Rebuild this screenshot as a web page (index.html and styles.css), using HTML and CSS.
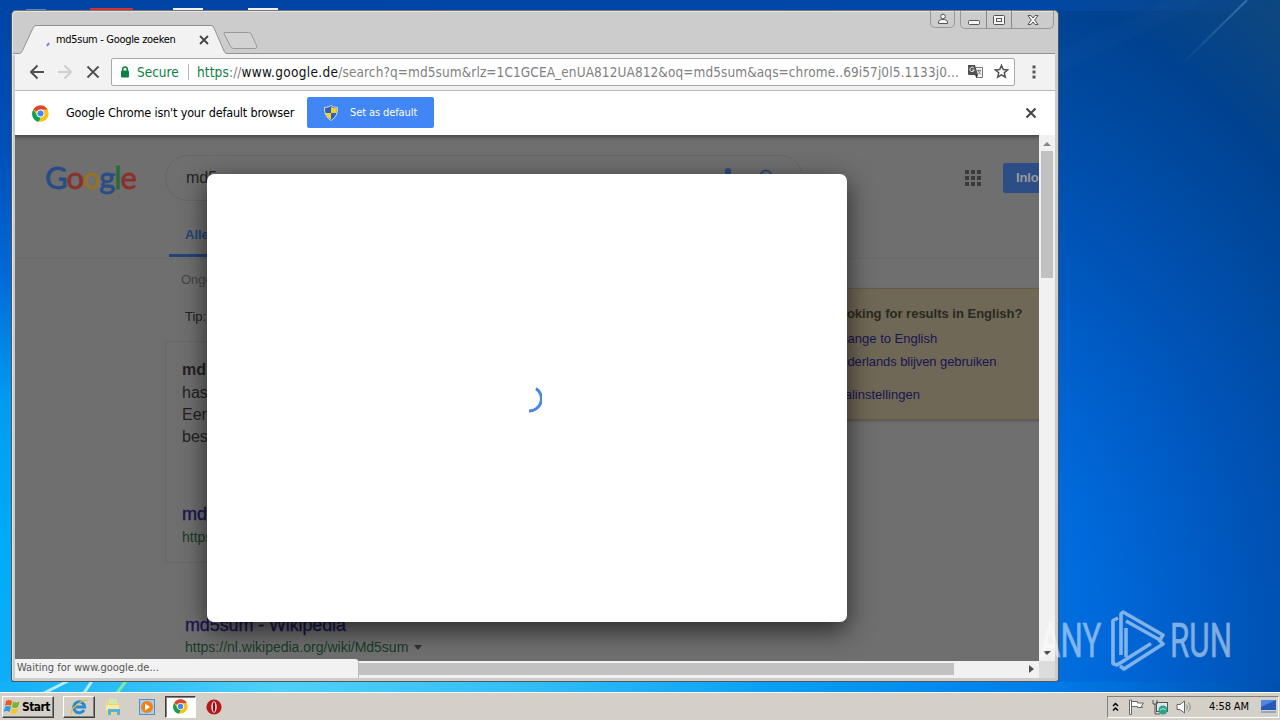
FILE: index.html
```html
<!DOCTYPE html>
<html lang="nl">
<head>
<meta charset="utf-8">
<title>md5sum - Google zoeken</title>
<link rel="stylesheet" href="styles.css">
</head>
<body>
<div class="desktop">
  <svg class="wallpaper" width="1280" height="693" viewBox="0 0 1280 693">
    <defs>
      <linearGradient id="ray" x1="0" y1="1" x2="1" y2="0"><stop offset="0" stop-color="#5a93c8" stop-opacity="0"/><stop offset="1" stop-color="#5a93c8" stop-opacity=".55"/></linearGradient>
    </defs>
    <path d="M1180 66L1247 0" stroke="url(#ray)" stroke-width="2"/>
    <path d="M1060 50L1170 0h40L1062 72z" fill="#2a6cb0" opacity=".08"/>
    <path d="M44 693l24-12M84 693l8-12" stroke="#b8ecff" stroke-width="3"/>
    <path d="M117 693l9-12" stroke="#7fe8a0" stroke-width="3"/>
    <path d="M26 9h20v3H26z" fill="#5d84b8"/><path d="M90 8h43v4H90z" fill="#d8302c"/><path d="M173 8h30v3h-30zM248 8h30v3h-30z" fill="#eef2f6"/>
  </svg>

  <main class="window">
    <header class="titlebar">
      <svg class="tabs" width="260" height="30" viewBox="0 0 260 30">
        <path d="M0 28.5h6.500q2-.5 3-3L20 3q1-2.500 3-2.500h175q2 0 3 2.500l10 23q1 2.500 3 2.500h46v2H0z" fill="#f2f2f2"/>
        <path d="M0 28.500h6.500q2-.5 3-3L20 3q1-2.500 3-2.500h175q2 0 3 2.500l10 23q1 2.500 3 2.500h46" fill="none" stroke="#929292"/>
        <path d="M211.500 7.500h24q2 0 3 2l5 11q1 3-1 3h-22q-2 0-3-2l-6-12q-1-2 0-2z" fill="#d2d2d2" stroke="#999"/>
      </svg>
      <div class="tab">
        <svg class="throb" width="6" height="6"><path d="M2 5l2-3" stroke="#6c7fe0" stroke-width="2"/></svg>
        <span class="tab-title">md5sum - Google zoeken</span>
        <svg width="10" height="10" viewBox="0 0 10 10"><path d="M1 1l8 8M9 1l-8 8" stroke="#444" stroke-width="1.800"/></svg>
      </div>
      <div class="controls">
        <span class="ctl user"><svg width="12" height="12" viewBox="0 0 12 12"><circle cx="6" cy="3.500" r="2.300"/><path d="M1.500 10.500V9q0-2 3-2.500h3q3 .5 3 2.500v1.500z"/></svg></span>
        <span class="ctl-set">
          <span class="ctl"><svg width="12" height="12" viewBox="0 0 12 12"><rect x=".5" y="6.500" width="11" height="4" rx="1"/></svg></span>
          <span class="ctl"><svg width="12" height="12" viewBox="0 0 12 12"><rect x=".5" y="1.500" width="11" height="9" rx="1"/><rect x="3.500" y="4.500" width="5" height="3"/></svg></span>
          <span class="ctl close"><svg width="12" height="12" viewBox="0 0 12 12"><path d="M1 1.500h3l2 2.500 2-2.500h3L7.700 6l3.300 4.500H8L6 8l-2 2.500H1L4.300 6z"/></svg></span>
        </span>
      </div>
    </header>

    <nav class="toolbar">
      <svg class="back" width="16" height="16" viewBox="0 0 16 16"><path d="M15 8H2.500M8.500 1.500L2 8l6.500 6.500" fill="none" stroke="#505050" stroke-width="2"/></svg>
      <svg class="fwd" width="16" height="16" viewBox="0 0 16 16"><path d="M1 8h12.500M7.500 1.500L14 8l-6.500 6.500" fill="none" stroke="#d0d0d0" stroke-width="2"/></svg>
      <svg class="stop" width="14" height="14" viewBox="0 0 14 14"><path d="M1.500 1.500l11 11M12.500 1.500l-11 11" stroke="#505050" stroke-width="1.800"/></svg>
      <div class="omnibox">
        <svg width="10" height="12" viewBox="0 0 10 12"><rect x="1" y="4.500" width="8" height="7" rx="1" fill="#0b8043"/><path d="M2.700 5V3.300a2.300 2.300 0 0 1 4.600 0V5" fill="none" stroke="#0b8043" stroke-width="1.500"/></svg>
        <span class="secure">Secure</span>
        <span class="bar"></span>
        <span class="url"><span class="scheme">https</span>://<b>www.google.de</b><span class="path">/search?q=md5sum&amp;rlz=1C1GCEA_enUA812UA812&amp;oq=md5sum&amp;aqs=chrome..69i57j0l5.1133j0...</span></span>
        <svg class="translate" width="15" height="15" viewBox="0 0 15 15"><path d="M6 3.500h8.500v10H8" fill="#f6f6f6" stroke="#777"/><path d="M0 1h7l3 10H1q-1 0-1-1z" fill="#505050"/><path d="M7 11h3l-1.500 3z" fill="#333"/><path d="M6 4.300A2.200 2.200 0 1 0 6.200 6H4.300" fill="none" stroke="#fff"/><path d="M9 6.500h4M11 5.500v1M12.500 6.500q-.5 2-2.500 4M10 7l3 3.500" fill="none" stroke="#777" stroke-width=".9"/></svg>
        <svg class="star" width="15" height="15" viewBox="0 0 15 15"><path d="M7.500 1.500l1.800 4 4.300.4-3.300 2.900 1 4.300-3.800-2.300-3.800 2.300 1-4.300L1.400 5.900l4.300-.4z" fill="none" stroke="#505050" stroke-width="1.500"/></svg>
      </div>
      <svg width="4" height="14" viewBox="0 0 4 14"><path d="M.5.500h3v3h-3zM.5 5.500h3v3h-3zM.5 10.500h3v3h-3z" fill="#555"/></svg>
    </nav>

    <section class="infobar">
      <svg width="17" height="17" viewBox="0 0 48 48"><use href="#chrome"/></svg>
      <span class="info-text">Google Chrome isn't your default browser</span>
      <button class="set-default">
        <svg width="14" height="16" viewBox="0 0 14 16"><path d="M7 .5Q9.500 2.500 13.500 2.500q.5 9-6.500 13-7-4-6.500-13Q4.500 2.500 7 .5z" fill="#2b62b8" stroke="#d5dce6"/><path d="M7 2q2.500 1.300 5.800 1.300Q13 5.500 12.500 8H7zM7 8v6.500Q2.500 12.500 1.500 8z" fill="#f8d229"/></svg>
        <span>Set as default</span>
      </button>
      <svg class="dismiss" width="12" height="12" viewBox="0 0 12 12"><path d="M1.500 1.500l9 9M10.500 1.500l-9 9" stroke="#444" stroke-width="2"/></svg>
    </section>

    <div class="viewport">
      <div class="page">
        <div class="search-head">
          <div class="logo"><span class="g1">G</span><span class="g2">o</span><span class="g3">o</span><span class="g1">g</span><span class="g4">l</span><span class="g2">e</span></div>
          <div class="searchbox">
            <span>md5sum</span>
            <svg class="mic" width="14" height="22" viewBox="0 0 14 22"><rect x="4" width="6" height="13" rx="3" fill="#2b4c80"/></svg>
            <svg class="lens" width="18" height="18" viewBox="0 0 18 18"><circle cx="7" cy="7" r="5.500" fill="none" stroke="#2b4c80" stroke-width="2"/></svg>
          </div>
          <svg class="apps" width="16" height="16" viewBox="0 0 16 16"><path d="M0 0h4v4H0zM6 0h4v4H6zM12 0h4v4h-4zM0 6h4v4H0zM6 6h4v4H6zM12 6h4v4h-4zM0 12h4v4H0zM6 12h4v4H6zM12 12h4v4h-4z" fill="#3b3b3b"/></svg>
          <span class="login">Inlo</span>
        </div>
        <div class="tabs-row"><span class="tab-all">Alle</span></div>
        <div class="columns">
          <div class="results">
            <p class="stats">Ongeveer</p>
            <p class="tip">Tip:</p>
            <div class="card">
              <b>md5sum</b>
              <span>hash</span><span>Een</span><span>bestand</span>
              <h3>md5sum</h3>
              <cite>https://</cite>
            </div>
            <h3 class="result">md5sum - Wikipedia</h3>
            <cite class="result-url">https://nl.wikipedia.org/wiki/Md5sum<i class="drop"></i></cite>
          </div>
          <aside class="lang">
            <b>Looking for results in English?</b>
            <span class="l1">Change to English</span>
            <span class="l2">Nederlands blijven gebruiken</span>
            <span class="l3">Taalinstellingen</span>
          </aside>
        </div>
        <div class="modal"><svg width="30" height="30" viewBox="0 0 30 30"><path d="M24 5.500A12.300 12.300 0 0 1 17 28" fill="none" stroke="#4a84e4" stroke-width="3"/></svg></div>
      </div>
      <div class="vscroll"><i class="up"></i><i class="vthumb"></i><i class="down"></i></div>
      <div class="hscroll"><i class="hthumb"></i><i class="right"></i></div>
      <div class="corner"></div>
      <div class="status">Waiting for www.google.de...</div>
    </div>
  </main>

  <div class="watermark">
    <span class="wm any">ANY</span>
    <svg width="58" height="66" viewBox="0 0 58 66" fill="none" stroke="#fff" stroke-width="3.600" stroke-linejoin="round"><path d="M10 10l-5 2.500v43L9 57l34-21.500"/><path d="M13 47V6l2-2 40 23-3 5L18 13"/><path d="M12 58l4 3 39-25-4-4M18 20v29"/></svg>
    <span class="wm run">RUN</span>
  </div>

  <footer class="taskbar">
    <div class="start"><svg width="17" height="16" viewBox="0 0 17 16"><path d="M2 2q3-2 6 0L7 7q-3-2-6 0z" fill="#e65b25"/><path d="M9 2.500q3 2 6.500 0L14 8q-3 2-6 0z" fill="#75b82a"/><path d="M1 8q3-2 6 0l-1.500 5q-3-2-6 0z" fill="#319be0"/><path d="M7.500 9q3 2 6.500 0l-1.500 5q-3 2-6 0z" fill="#f7c52c"/></svg><b>Start</b></div>
    <div class="task raised"><svg width="18" height="18" viewBox="0 0 18 18"><path d="M14 12a5.500 5.500 0 1 1 .7-3H5" fill="none" stroke="#238ad8" stroke-width="3"/><path d="M2 16Q-1 13 8 6q8-6 9-3" fill="none" stroke="#e6b932" stroke-width="1.300"/></svg></div>
    <div class="task"><svg width="18" height="18" viewBox="0 0 18 18"><path d="M2 3h5l1 2h7v11H2z" fill="#f0d476"/><path d="M5 1h8v5H5z" fill="#cfe9b0"/><path d="M2 7h13v5H2z" fill="#f9e9a6"/><path d="M4 17v-6h12v6h-3v-3H7v3z" fill="#55b3dd"/></svg></div>
    <div class="task"><svg width="16" height="16" viewBox="0 0 16 16"><rect x=".5" y=".5" width="15" height="15" fill="#a8cff0" stroke="#558fc4"/><circle cx="8" cy="8" r="6" fill="#f08218"/><path d="M6 4.500l5 3.500-5 3.500z" fill="#fff"/></svg></div>
    <div class="task pressed"><svg width="15" height="15" viewBox="0 0 48 48"><g id="chrome"><circle cx="24" cy="24" r="23" fill="#fbc116"/><path d="M24 24L4 12.500A23 23 0 0 1 44 13H24z" fill="#db4437"/><path d="M24 24l-8 23A23 23 0 0 1 4 12.500L14.500 30z" fill="#0f9d58"/><path d="M14 30l10 6-5 11-10-6z" fill="#0f9d58"/><circle cx="24" cy="24" r="11" fill="#fff"/><circle cx="24" cy="24" r="8.500" fill="#4285f4"/></g></svg></div>
    <div class="task opera"><svg width="16" height="16" viewBox="0 0 16 16"><circle cx="8" cy="8" r="7.600" fill="#b5171c"/><ellipse cx="8" cy="8" rx="2.700" ry="5.700" fill="#f6e6e6"/><ellipse cx="8" cy="8" rx="1.200" ry="5" fill="#8e1014"/></svg></div>
    <div class="tray">
      <svg width="7" height="10" viewBox="0 0 7 10"><path d="M1 4l2.500-2.500L6 4M1 8.500L3.500 6 6 8.500" fill="none" stroke="#000" stroke-width="1.500"/></svg>
      <svg class="flag" width="17" height="16" viewBox="0 0 17 16"><path d="M1.500 1v14.500h2V1zM3.500 2.500h6v1.500h6l-2 3 1 1.500h-5V7.500h-6z" fill="#fff" stroke="#666"/></svg>
      <svg class="net" width="17" height="16" viewBox="0 0 17 16"><rect x="4.500" y="3.500" width="11" height="9" fill="#dbe8ea" stroke="#555"/><path d="M1 1v4h4V1M3 5v10h5" fill="none" stroke="#555"/><circle cx="11" cy="11" r="4.500" fill="#2aa38c"/><path d="M8 11q3-3 6 0" stroke="#b4ead9" fill="none"/></svg>
      <svg class="vol" width="17" height="14" viewBox="0 0 17 14"><path d="M1 4.500h3L8.500 1v12L4 9.500H1z" fill="#fff" stroke="#666"/><path d="M10.500 4.500q2 2.500 0 5M12.500 2.500q3.500 4.500 0 9" fill="none" stroke="#888"/></svg>
      <span class="clock">4:58 AM</span>
      <svg class="show" width="15" height="13" viewBox="0 0 16 13" preserveAspectRatio="none"><path d="M0 0h16v10H0z" fill="#2459b8"/><path d="M0 0h16L0 7z" fill="#4d8add"/><path d="M0 11h16v2H0z" fill="#93a6c4"/></svg>
    </div>
  </footer>
</div>
</body>
</html>
```

FILE: styles.css
```css
* { box-sizing: border-box; }
body { margin: 0; overflow: hidden; }
p, h3 { margin: 0; font-weight: normal; }
cite, i { font-style: normal; }
svg { display: block; flex: none; }

.desktop {
  position: relative; width: 1280px; height: 720px; overflow: hidden;
  display: flex; flex-direction: column; justify-content: flex-end;
  font-family: "DejaVu Sans Condensed", "DejaVu Sans", sans-serif; font-size: 11px;
  background:
    linear-gradient(90deg, #12b0f6, #4fd0f8 22%, #35bff5 40%, #0aa0f4 60%, #007cea 82%, #0050b0) 0 682px / 1280px 11px no-repeat,
    linear-gradient(180deg, #0044a4, #0050ba 22%, #006ad8 40%, #009cf0 58%, #00acf8 80%, #10aef6) 0 0 / 12px 693px no-repeat,
    linear-gradient(90deg, #0044a4, #0048a8 80%, #0d4680) 0 0 / 1280px 11px no-repeat,
    radial-gradient(ellipse 660px 790px at 860px 640px, #0084f2, #006adc 36%, #0054b8 60%, #004290 87%, #0d4680);
}
.wallpaper { position: absolute; left: 0; top: 0; }

.window {
  position: absolute; left: 11px; top: 10px; width: 1048px; height: 672px;
  display: flex; flex-direction: column; padding: 1px 3px 3px;
  background: #ccc; border: 1px solid #555; border-top-color: #777; border-radius: 5px 5px 3px 3px;
  box-shadow: inset 1px 1px 0 #e4e4e4;
}
.titlebar { position: relative; z-index: 1; height: 42px; flex: none; display: flex; align-items: flex-start; justify-content: space-between; border-bottom: 1px solid #929292; }
.tabs { position: absolute; left: -2px; top: 13px; }
.tab { position: relative; display: flex; align-items: center; height: 29px; margin: 13px 0 0 29px; }
.throb { margin: 8px 5px 0 1px; }
.tab-title { width: 143px; letter-spacing: -.31px; white-space: nowrap; }
.controls { display: flex; margin: -1px 1px 0 0; }
.ctl { display: flex; justify-content: center; align-items: center; width: 25px; height: 17px; }
.ctl svg { fill: #f4f4f4; stroke: #555; }
.user, .ctl-set { border: 1px solid #999; border-top: 0; border-radius: 0 0 5px 5px; }
.user { margin-right: 5px; }
.ctl-set { display: flex; }
.ctl-set .ctl + .ctl { border-left: 1px solid #888; }
.ctl.close { width: 42px; }

.toolbar { height: 37px; flex: none; display: flex; align-items: center; padding: 0 0 1px 14px; background: #f2f2f2; border-bottom: 1px solid #b9b9b9; }
.fwd { margin-left: 12px; }
.stop { margin-left: 13px; }
.omnibox { flex: none; width: 904px; height: 28px; margin: 0 17px 0 11px; padding-left: 8px; display: flex; align-items: center; background: #fff; border: 1px solid #a9a9a9; border-radius: 2px; font-size: 13.500px; }
.secure { margin-left: 7px; width: 43px; color: #0b8043; }
.bar { width: 1px; height: 16px; margin: 0 8px; background: #b5b5b5; }
.url { width: 764px; white-space: nowrap; color: #808080; letter-spacing: .128px; }
.url b { font-weight: normal; color: #111; letter-spacing: .32px; }
.path { letter-spacing: .096px; }
.scheme { color: #0b8043; }
.translate { margin-left: 7px; }
.star { margin-left: 11px; }

.infobar { height: 44px; flex: none; display: flex; align-items: center; padding: 0 18px 0 17px; background: #fff; }
.info-text { margin: -2px 0 0 17px; width: 241px; font-size: 12.500px; letter-spacing: -.17px; white-space: nowrap; }
.set-default { display: flex; align-items: center; gap: 12px; width: 127px; height: 31px; margin: -1px 0 0; padding: 0 0 0 17px; border: 0; border-radius: 2px; background: #4285f4; color: #fff; font: inherit; letter-spacing: -.1px; white-space: nowrap; }
.dismiss { margin-left: auto; }

.viewport { position: relative; flex: 1; min-height: 0; display: grid; grid-template: 526px 17px / 1024px 16px; background: #f1f1f1; }
.page { position: relative; overflow: hidden; background: #6f6f6f; box-shadow: inset 0 6px 5px -5px #333; font-family: "Liberation Sans", sans-serif; font-size: 13px; color: #222; }
.search-head { display: flex; align-items: center; height: 86px; padding-left: 30px; }
.logo { flex: none; width: 120px; padding-bottom: 2px; font: 31px/44px "Lato", sans-serif; letter-spacing: -1.100px; -webkit-text-stroke: .8px; }
.g1 { color: #294c87; } .g2 { color: #8b302b; } .g3 { color: #927328; } .g4 { color: #286b3a; }
.searchbox { flex: none; display: flex; align-items: center; width: 638px; height: 46px; padding: 0 20px; border: 1px solid #666; border-radius: 23px; font-size: 16px; }
.mic { margin: 2px 0 0 auto; }
.lens { margin: 0 5px 0 24px; }
.apps { margin-left: 162px; }
.login { flex: none; width: 90px; height: 30px; margin-left: 22px; padding-left: 13px; border-radius: 2px; background: #2d4d87; color: #999; font: bold 13px/30px "Liberation Sans", sans-serif; letter-spacing: -.1px; }
.tabs-row { height: 38px; padding-left: 154px; border-bottom: 1px solid #696969; }
.tab-all { display: block; width: 58px; height: 36px; padding-left: 16px; border-bottom: 3px solid #234478; color: #234478; font-weight: bold; line-height: 27px; }
.columns { display: flex; align-items: flex-start; }
.results { flex: none; width: 809px; padding-left: 150px; }
.stats { padding: 13px 0 0 16px; line-height: 15px; color: #454545; }
.tip { padding: 22px 0 0 20px; line-height: 15px; }
.card { display: flex; flex-direction: column; width: 632px; height: 222px; margin: 17px 0 0; padding: 17px 16px; border: 1px solid #676767; border-radius: 3px; font-size: 16px; line-height: 22px; }
.card b { margin-bottom: 1px; }
.card h3 { margin-top: 54px; font-size: 18px; color: #1b1452; -webkit-text-stroke: .4px; line-height: 24px; }
.card cite, .result-url { font-size: 14px; color: #173c28; }
.result { padding: 50px 0 0 20px; font-size: 18px; letter-spacing: -.12px; line-height: 24px; color: #1b1452; -webkit-text-stroke: .3px; }
.result-url { display: flex; align-items: center; padding-left: 20px; line-height: 20px; }
.drop { border: 4px solid transparent; border-top: 5px solid #333; border-bottom: 0; margin-left: 6px; }
.lang { flex: none; display: flex; flex-direction: column; width: 230px; height: 132px; margin-top: 29px; padding: 17px 0 0 6px; background: #6f6856; border: 1px solid #625a45; box-shadow: 0 1px 2px #555; line-height: 16px; color: #1b1452; white-space: nowrap; }
.lang b { color: #292821; }
.l1 { margin-top: 9px; } .l2 { margin-top: 7px; letter-spacing: -.08px; } .l3 { margin-top: 17px; }
.modal { position: absolute; left: 192px; top: 39px; width: 640px; height: 448px; display: flex; align-items: center; justify-content: center; background: #fff; border-radius: 7px; box-shadow: 0 8px 26px rgba(0,0,0,.65); }

.vscroll { display: flex; flex-direction: column; align-items: center; background: #f1f1f1; }
.up, .down, .right { flex: none; width: 0; height: 0; border: 4px solid transparent; }
.up { margin: 7px 0 5px; border-top: 0; border-bottom: 4px solid #888; }
.vthumb { width: 12px; height: 127px; background: #c1c1c1; }
.down { margin-top: auto; margin-bottom: 6px; border-bottom: 0; border-top: 4px solid #505050; }
.hscroll { display: flex; align-items: center; padding-bottom: 1px; background: #f1f1f1; }
.hthumb { width: 939px; height: 12px; background: #c1c1c1; }
.right { margin-left: auto; margin-right: 5px; border-right: 0; border-left: 5px solid #505050; }
.corner { background: #dcdcdc; }
.status { position: absolute; left: 0; bottom: 0; width: 344px; height: 19px; padding-left: 2px; line-height: 18px; background: #f2f2f2; border-right: 1px solid #bbb; border-radius: 0 4px 0 0; color: #555; }

.watermark { position: absolute; left: 1040px; top: 608px; display: flex; align-items: center; height: 66px; opacity: .5; }
.wm { display: block; font: 49px/66px "Roboto", "Liberation Sans", sans-serif; color: #fff; transform-origin: 0 50%; transform: scaleX(.64); white-space: nowrap; -webkit-text-stroke: .5px #fff; }
.any { width: 68px; }
.run { width: 65px; margin-left: 4px; }

.taskbar { position: relative; height: 28px; display: flex; align-items: center; padding: 0 1px 0 2px; background: #d4d0c8; border-top: 1px solid #fff; }
.start { display: flex; align-items: center; gap: 1px; width: 52px; height: 22px; padding-left: 1px; border: 1px solid; border-color: #fff #404040 #404040 #fff; box-shadow: inset -1px -1px #808080; font-size: 12px; letter-spacing: -.6px; }
.task { display: flex; align-items: center; justify-content: center; width: 34px; height: 22px; }
.raised { width: 32px; margin: 0 1px 0 9px; border: 1px solid; border-color: #fff #404040 #404040 #fff; box-shadow: inset -1px -1px #808080; }
.pressed { width: 31px; margin-left: 1px; background: #fff; border: 1px solid; border-color: #404040 #fff #fff #404040; box-shadow: inset 1px 1px #808080; }
.opera { margin-left: 1px; }
.tray { display: flex; align-items: center; width: 172px; height: 22px; margin-left: auto; padding-left: 4px; border: 1px solid; border-color: #808080 #fff #fff #808080; }
.flag { margin-left: 9px; } .net { margin-left: 7px; } .vol { margin-left: 7px; }
.clock { width: 41px; margin: 0 11px 0 16px; white-space: nowrap; letter-spacing: -.1px; }
```
